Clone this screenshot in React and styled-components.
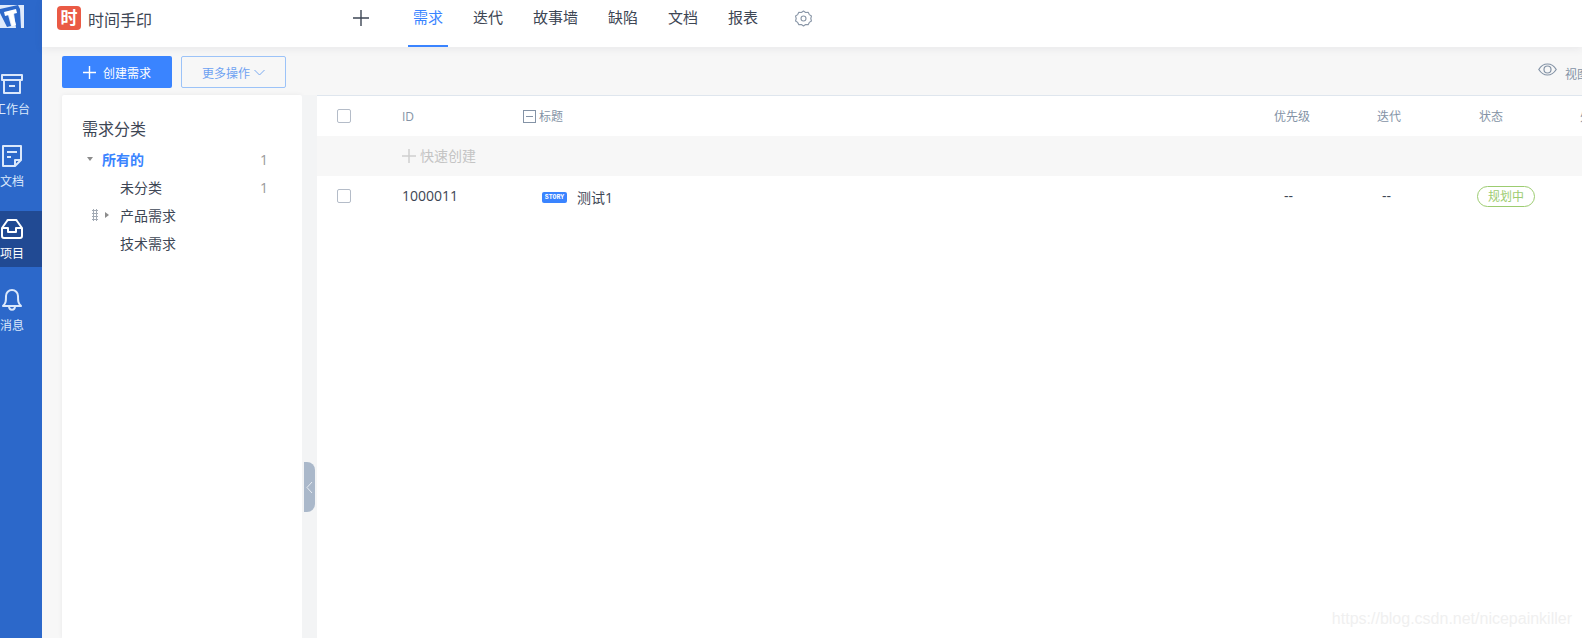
import React from 'react'
import styled, { createGlobalStyle } from 'styled-components'

const GlobalStyle = createGlobalStyle`
  html, body {
    margin: 0;
    height: 100%;
    overflow: hidden;
  }
  body {
    font-family: "Open Sans", "Noto Sans CJK SC", sans-serif;
    color: #3d4a5c;
  }
  #root {
    height: 100%;
  }
`

const navItems = [
  { label: '工作台', icon: 'archive', top: 9, gap: 6, height: 71 },
  { label: '文档', icon: 'note', top: 10, gap: 6, height: 77 },
  { label: '项目', icon: 'inbox', top: 6, gap: 5, height: 56, active: true },
  { label: '消息', icon: 'bell', top: 21, gap: 6, height: 72 },
]

const tabs = ['需求', '迭代', '故事墙', '缺陷', '文档', '报表']

const categories = [
  { name: '所有的', count: 1, arrow: 'down', root: true },
  { name: '未分类', count: 1 },
  { name: '产品需求', arrow: 'right', drag: true },
  { name: '技术需求' },
]

const NavIcon = ({ type }) => (
  <svg width="24" height="24" viewBox="0 0 24 24" fill="none" stroke="#dbe8fb" strokeWidth="2" strokeLinejoin="round">
    {type === 'archive' && (
      <>
        <rect x="2" y="3" width="20" height="5" />
        <path d="M4 8v13h16V8M9 14h6" />
      </>
    )}
    {type === 'note' && (
      <>
        <path d="M15 22H3V2h18v14z" />
        <path d="M15 22v-6h6M7 8h10M7 13h4" />
      </>
    )}
    {type === 'inbox' && (
      <path d="M2 11l5-7a2 2 0 0 1 1-1h8a2 2 0 0 1 1 1l5 7v8a2 2 0 0 1-2 2H4a2 2 0 0 1-2-2zM2 11h6v4h8v-4h6" stroke="#ffffff" />
    )}
    {type === 'bell' && (
      <path d="M3 18c3-3 3-5 3-10a6 6 0 0 1 12 0c0 5 0 7 3 10zM9 18c0 5 6 5 6 0" />
    )}
  </svg>
)

const App = () => {
  return (
    <Page>
      <GlobalStyle />
      <Sidebar>
        <Logo>
          <svg width="24" height="24" viewBox="0 0 24 24">
            <path d="M0 0h24v23H0z" fill="#dfeafb" />
            <path d="M0 4l18-4 2 4 1 19h-5L14 8 8 10l3 11-4 1L0 8z" fill="#2c68ca" />
            <path d="M4 7l12-3 1 4-4 1 3 11-4 1-3-11-4 1z" fill="#ffffff" />
          </svg>
        </Logo>
        {navItems.map((item) => (
          <NavItem key={item.label} $active={item.active} $height={item.height} $top={item.top} $gap={item.gap}>
            <NavIcon type={item.icon} />
            <span>{item.label}</span>
          </NavItem>
        ))}
      </Sidebar>

      <Main>
        <Header>
          <Brand>
            <BrandMark>时</BrandMark>
            <BrandName>时间手印</BrandName>
          </Brand>
          <HeaderPlus>
            <svg width="18" height="18" viewBox="0 0 18 18" stroke="#3d4654" strokeWidth="1.4">
              <path d="M9 1v16M1 9h16" />
            </svg>
          </HeaderPlus>
          <Tabs>
            {tabs.map((tab, i) => (
              <Tab key={tab} $active={i === 0}>{tab}</Tab>
            ))}
          </Tabs>
          <Gear>
            <svg width="17" height="17" viewBox="0 0 24 24" fill="none" stroke="#8a97a8" strokeWidth="1.6" strokeLinejoin="round">
              <path d="M12 1.500l3 2 3.600-.2 1.600 3.200 3 2-.9 3.500.9 3.500-3 2-1.600 3.200-3.600-.2-3 2-3-2-3.600.2-1.600-3.200-3-2 .9-3.500-.9-3.500 3-2 1.600-3.200 3.600.2z" />
              <circle cx="12" cy="12" r="3.500" />
            </svg>
          </Gear>
        </Header>

        <Toolbar>
          <PrimaryButton>
            <svg width="13" height="13" viewBox="0 0 13 13" stroke="#fff" strokeWidth="1.4">
              <path d="M6.500 0v13M0 6.500h13" />
            </svg>
            <span>创建需求</span>
          </PrimaryButton>
          <OutlineButton>
            <span>更多操作</span>
            <svg width="11" height="7" viewBox="0 0 11 7" fill="none" stroke="#7aaaf0" strokeWidth="1">
              <path d="M.5 1l5 5 5-5" />
            </svg>
          </OutlineButton>
          <ViewSwitch>
            <svg width="19" height="13" viewBox="0 0 19 13" fill="none" stroke="#8493a6" strokeWidth="1.2">
              <path d="M.8 6.500C3 2.600 6 1 9.500 1s6.500 1.600 8.700 5.500C16 10 13 12 9.500 12S3 10 .8 6.500z" />
              <circle cx="9.500" cy="6.500" r="3.500" />
            </svg>
            <span>视图</span>
          </ViewSwitch>
        </Toolbar>

        <Content>
          <CategoryPanel>
            <PanelTitle>需求分类</PanelTitle>
            {categories.map((cat) => (
              <CategoryRow key={cat.name} $root={cat.root}>
                {!cat.root && <DragSlot>{cat.drag && <DragDots />}</DragSlot>}
                <ArrowSlot>{cat.arrow && <Arrow $dir={cat.arrow} />}</ArrowSlot>
                <CategoryName>{cat.name}</CategoryName>
                {cat.count && <CategoryCount>{cat.count}</CategoryCount>}
              </CategoryRow>
            ))}
          </CategoryPanel>

          <Gutter>
            <CollapseHandle>
              <svg width="7" height="13" viewBox="0 0 7 13" fill="none" stroke="#e8edf3" strokeWidth="1">
                <path d="M6 1L1 6.500 6 12" />
              </svg>
            </CollapseHandle>
          </Gutter>

          <TablePanel>
            <HeaderRow>
              <Cell><Checkbox /></Cell>
              <Cell>ID</Cell>
              <TitleHead><MinusBox />标题</TitleHead>
              <Cell>优先级</Cell>
              <Cell>迭代</Cell>
              <Cell>状态</Cell>
              <Cell>处理人</Cell>
            </HeaderRow>
            <QuickCreate>
              <svg width="14" height="14" viewBox="0 0 14 14" stroke="#cfcfcf" strokeWidth="1.500">
                <path d="M7 0v14M0 7h14" />
              </svg>
              快速创建
            </QuickCreate>
            <DataRow>
              <Cell><Checkbox /></Cell>
              <Cell>1000011</Cell>
              <StoryCell>
                <StoryTag>STORY</StoryTag>
                <span>测试1</span>
              </StoryCell>
              <DashCell $indent={10}>--</DashCell>
              <DashCell $indent={5}>--</DashCell>
              <Cell><StatusTag>规划中</StatusTag></Cell>
            </DataRow>
          </TablePanel>
        </Content>
      </Main>

      <Watermark>https://blog.csdn.net/nicepainkiller</Watermark>
    </Page>
  )
}

const Page = styled.div`
  position: relative;
  display: flex;
  height: 638px;
  overflow: hidden;
  background: #f7f7f7;
`

const Sidebar = styled.aside`
  flex: 0 0 42px;
  display: flex;
  flex-direction: column;
  background: #2c68ca;
  overflow: hidden;
`

const Logo = styled.div`
  width: 24px;
  height: 63px;
  padding-top: 5px;
  box-sizing: border-box;

  svg {
    display: block;
  }
`

const NavItem = styled.div`
  width: 42px;
  height: ${(p) => p.$height}px;
  flex: none;
  padding-top: ${(p) => p.$top}px;
  box-sizing: border-box;
  background: ${(p) => (p.$active ? '#214a93' : 'transparent')};

  svg {
    display: block;
  }

  span {
    display: block;
    width: 36px;
    margin: ${(p) => p.$gap}px 0 0 -6px;
    font-size: 12px;
    line-height: 16px;
    text-align: center;
    color: ${(p) => (p.$active ? '#ffffff' : '#dbe8fb')};
  }
`

const Main = styled.div`
  flex: 1;
  min-width: 0;
  display: flex;
  flex-direction: column;
`

const Header = styled.header`
  flex: 0 0 47px;
  display: flex;
  background: #fff;
  box-shadow: 0 2px 8px rgba(60, 70, 90, 0.08);
  position: relative;
`

const Brand = styled.div`
  width: 304px;
  padding: 6px 0 0 15px;
  box-sizing: border-box;
  display: flex;
  gap: 7px;
`

const BrandMark = styled.div`
  width: 24px;
  height: 24px;
  border-radius: 4px;
  background: #ea5a45;
  color: #fff;
  font-size: 17px;
  font-weight: 700;
  line-height: 24px;
  text-align: center;
`

const BrandName = styled.div`
  font-size: 16px;
  line-height: 28px;
  color: #3d4654;
`

const HeaderPlus = styled.div`
  width: 62px;
  padding: 9px 0 0 6px;
  box-sizing: border-box;
`

const Tabs = styled.nav`
  display: flex;
  gap: 20px;
`

const Tab = styled.div`
  height: 47px;
  padding: 5px 5px 0;
  box-sizing: border-box;
  font-size: 15px;
  line-height: 24px;
  color: ${(p) => (p.$active ? '#3a84ff' : '#3d4654')};
  border-bottom: 2px solid ${(p) => (p.$active ? '#3a84ff' : 'transparent')};
`

const Gear = styled.div`
  margin-left: 32px;
  padding-top: 10px;
`

const Toolbar = styled.div`
  flex: 0 0 48px;
  display: flex;
  align-items: flex-start;
  padding: 9px 0 0 20px;
  box-sizing: border-box;
`

const PrimaryButton = styled.div`
  width: 110px;
  height: 32px;
  display: flex;
  align-items: center;
  justify-content: center;
  gap: 7px;
  border-radius: 2px;
  background: #3a84ff;
  color: #fff;
  font-size: 12px;

  span {
    margin-top: 2px;
  }
`

const OutlineButton = styled.div`
  width: 105px;
  height: 32px;
  margin-left: 9px;
  display: flex;
  align-items: center;
  justify-content: center;
  gap: 4px;
  box-sizing: border-box;
  border: 1px solid #9cc3f8;
  border-radius: 2px;
  color: #6ea2f2;
  font-size: 12px;

  span {
    margin-top: 2px;
  }
`

const ViewSwitch = styled.div`
  margin-left: auto;
  width: 44px;
  flex: none;
  display: flex;
  gap: 8px;
  padding-top: 8px;
  font-size: 12px;
  line-height: 18px;
  color: #8493a6;
  white-space: nowrap;

  svg {
    flex: none;
    margin-top: -1px;
  }

  span {
    margin-top: 2px;
  }
`

const Content = styled.div`
  flex: 1;
  min-height: 0;
  display: flex;
  padding-left: 20px;
`

const CategoryPanel = styled.div`
  flex: 0 0 240px;
  padding-top: 22px;
  box-sizing: border-box;
  background: #fff;
  border-radius: 2px 2px 0 0;
  box-shadow: 0 0 4px rgba(60, 70, 90, 0.08);
`

const PanelTitle = styled.div`
  padding-left: 20px;
  font-size: 16px;
  line-height: 24px;
  margin-bottom: 4px;
  color: #3d4654;
`

const CategoryRow = styled.div`
  height: 28px;
  display: flex;
  align-items: center;
  padding: 0 34px 0 ${(p) => (p.$root ? 25 : 30)}px;
  font-size: 14px;
  font-weight: ${(p) => (p.$root ? 700 : 400)};
  color: ${(p) => (p.$root ? '#3a84ff' : '#3d4654')};
`

const DragSlot = styled.div`
  width: 13px;
  flex: none;
`

const DragDots = styled.div`
  width: 6px;
  height: 12px;
  background-image: radial-gradient(circle, #a3abb5 1px, transparent 1.100px);
  background-size: 3px 3px;
`

const ArrowSlot = styled.div`
  width: 15px;
  flex: none;
  display: flex;
  align-items: center;
`

const Arrow = styled.i`
  display: block;
  width: 0;
  height: 0;
  border-style: solid;
  ${(p) =>
    p.$dir === 'down'
      ? 'border-width: 4px 3.500px 0; border-color: #8c8c8c transparent transparent;'
      : 'border-width: 3.500px 0 3.500px 4px; border-color: transparent transparent transparent #8c8c8c;'}
`

const CategoryName = styled.div`
  flex: 1;
`

const CategoryCount = styled.div`
  font-weight: 400;
  color: #9a9a9a;
`

const Gutter = styled.div`
  flex: 0 0 15px;
  padding: 367px 0 0 2px;
  box-sizing: border-box;
  background: #f3f4f5;
`

const CollapseHandle = styled.div`
  width: 11px;
  height: 50px;
  display: flex;
  align-items: center;
  justify-content: center;
  background: #aab8ca;
  border-radius: 0 8px 8px 0;
`

const TablePanel = styled.div`
  flex: 1;
  min-width: 0;
  background: #fff;
  border-top: 1px solid #dfe6ee;
  overflow: hidden;
`

const columns = '65px 120px 752px 103px 102px 101px 60px'

const HeaderRow = styled.div`
  display: grid;
  grid-template-columns: ${columns};
  align-items: center;
  height: 40px;
  padding-left: 20px;
  font-size: 12px;
  color: #8493a6;
  white-space: nowrap;
`

const Cell = styled.div`
  display: flex;
  align-items: center;
`

const TitleHead = styled(Cell)`
  gap: 3px;
  margin-left: 1px;
`

const MinusBox = styled.i`
  width: 11px;
  height: 11px;
  border: 1px solid #8493a6;
  display: flex;
  align-items: center;
  justify-content: center;

  &::before {
    content: '';
    width: 7px;
    height: 1px;
    background: #8493a6;
  }
`

const Checkbox = styled.i`
  display: block;
  width: 12px;
  height: 12px;
  border: 1px solid #b4bcc8;
  border-radius: 2px;
  background: #fff;
`

const QuickCreate = styled.div`
  height: 40px;
  display: flex;
  align-items: center;
  gap: 4px;
  padding-left: 85px;
  background: #f7f7f7;
  font-size: 14px;
  line-height: 38px;
  color: #c4c4c4;
`

const DataRow = styled(HeaderRow)`
  height: 39px;
  color: #3d4654;
  font-size: 14px;
`

const StoryCell = styled(Cell)`
  margin: 3px 0 0 20px;
  gap: 10px;
`

const StoryTag = styled.span`
  width: 25px;
  height: 11px;
  border-radius: 2px;
  background: #3a84ff;
  color: #fff;
  font-family: "Liberation Mono", monospace;
  font-size: 6.500px;
  font-weight: 700;
  line-height: 11px;
  text-align: center;
`

const DashCell = styled(Cell)`
  padding-left: ${(p) => p.$indent}px;
`

const StatusTag = styled.span`
  width: 58px;
  height: 21px;
  box-sizing: border-box;
  border: 1px solid #9ccc70;
  border-radius: 11px;
  margin: 1px 0 0 -2px;
  font-size: 12px;
  line-height: 19px;
  text-align: center;
  color: #9ccc70;
`

const Watermark = styled.div`
  position: absolute;
  right: 10px;
  top: 609px;
  font-family: "Liberation Sans", sans-serif;
  font-size: 16px;
  line-height: 20px;
  color: #f0f0f0;
`

export default App
